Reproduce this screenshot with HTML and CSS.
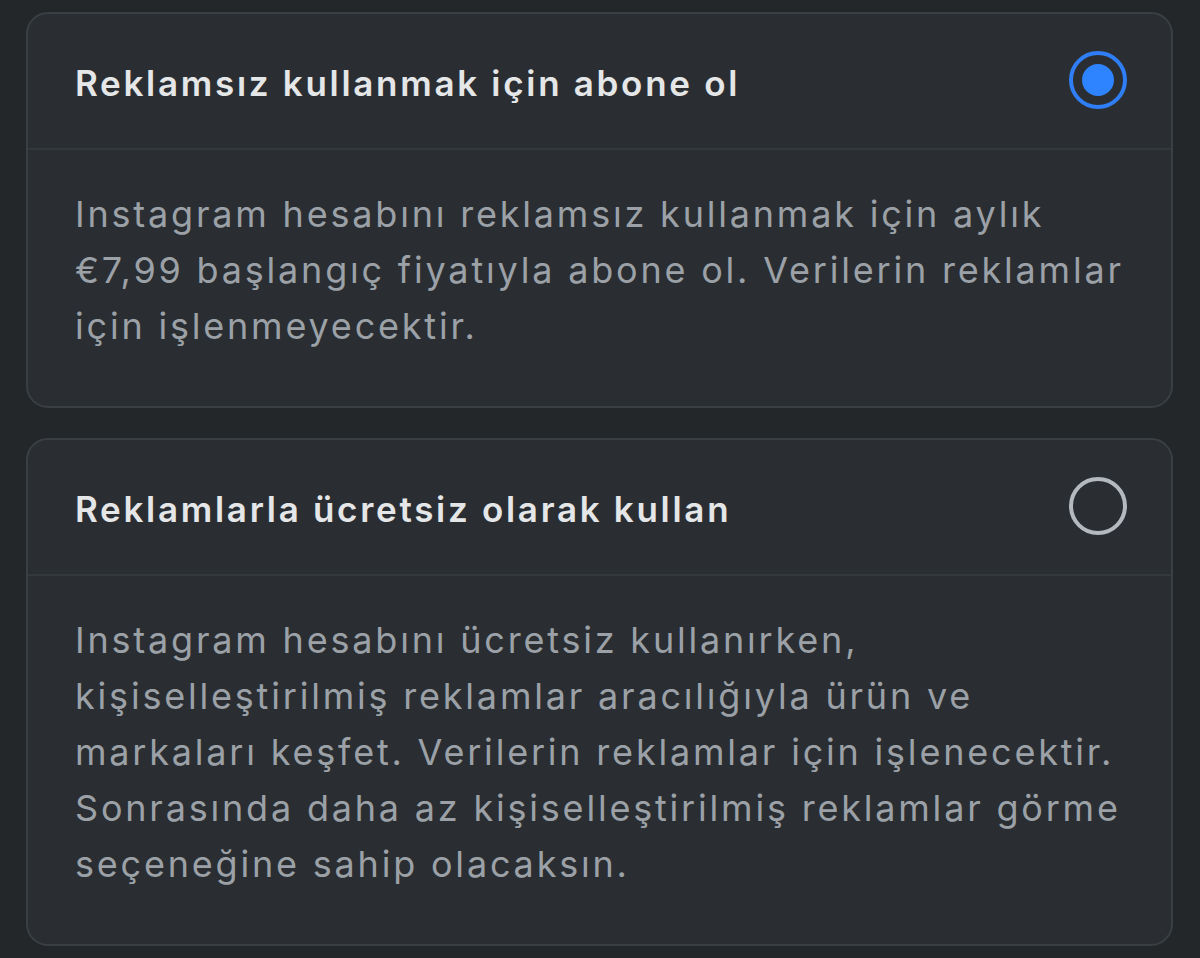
FILE: index.html
```html
<!DOCTYPE html>
<html lang="tr">
<head>
<meta charset="utf-8">
<link rel="stylesheet" href="styles.css">
</head>
<body>
<main class="list">
  <section class="card">
    <div class="card-head">
      <h2 class="title">Reklamsız kullanmak için abone ol</h2>
      <span class="radio radio-on"><span class="dot"></span></span>
    </div>
    <p class="desc">Instagram hesabını reklamsız kullanmak için aylık<br>€7,99 başlangıç fiyatıyla abone ol. Verilerin reklamlar<br>için işlenmeyecektir.</p>
  </section>
  <section class="card">
    <div class="card-head">
      <h2 class="title">Reklamlarla ücretsiz olarak kullan</h2>
      <span class="radio"></span>
    </div>
    <p class="desc">Instagram hesabını ücretsiz kullanırken,<br>kişiselleştirilmiş reklamlar aracılığıyla ürün ve<br>markaları keşfet. Verilerin reklamlar için işlenecektir.<br>Sonrasında daha az kişiselleştirilmiş reklamlar görme<br>seçeneğine sahip olacaksın.</p>
  </section>
</main>
</body>
</html>
```
FILE: styles.css
```css
html, body {
  margin: 0;
  padding: 0;
  background: #24272a;
  height: 100%;
}
body {
  font-family: Inter, "Noto Sans", sans-serif;
  overflow: hidden;
}
.list {
  display: flex;
  flex-direction: column;
  gap: 30px;
  padding: 12px 27px 0 26px;
}
.card {
  background: #2a2e32;
  border: 2px solid #3a3f44;
  border-radius: 22px;
}
.card-head {
  display: flex;
  align-items: center;
  justify-content: space-between;
  height: 136px;
  padding: 4px 44px 0 47px;
  border-bottom: 2px solid #33383d;
  box-sizing: border-box;
}
.title {
  margin: 0;
  font-size: 35px;
  font-weight: 600;
  color: #e4e6e8;
  letter-spacing: 2.7px;
}
.radio {
  width: 50px;
  height: 50px;
  border-radius: 50%;
  border: 4px solid #b3b9be;
  display: flex;
  align-items: center;
  justify-content: center;
  flex: none;
  margin-top: -6px;
}
.radio-on {
  border-color: #2f7ef5;
}
.dot {
  width: 32px;
  height: 32px;
  border-radius: 50%;
  background: #2e83ff;
}
.desc {
  margin: 0;
  padding: 36px 20px 52px 47px;
  font-size: 36px;
  line-height: 56px;
  color: #9ba1a7;
  letter-spacing: 2.8px;
  white-space: nowrap;
}
```
